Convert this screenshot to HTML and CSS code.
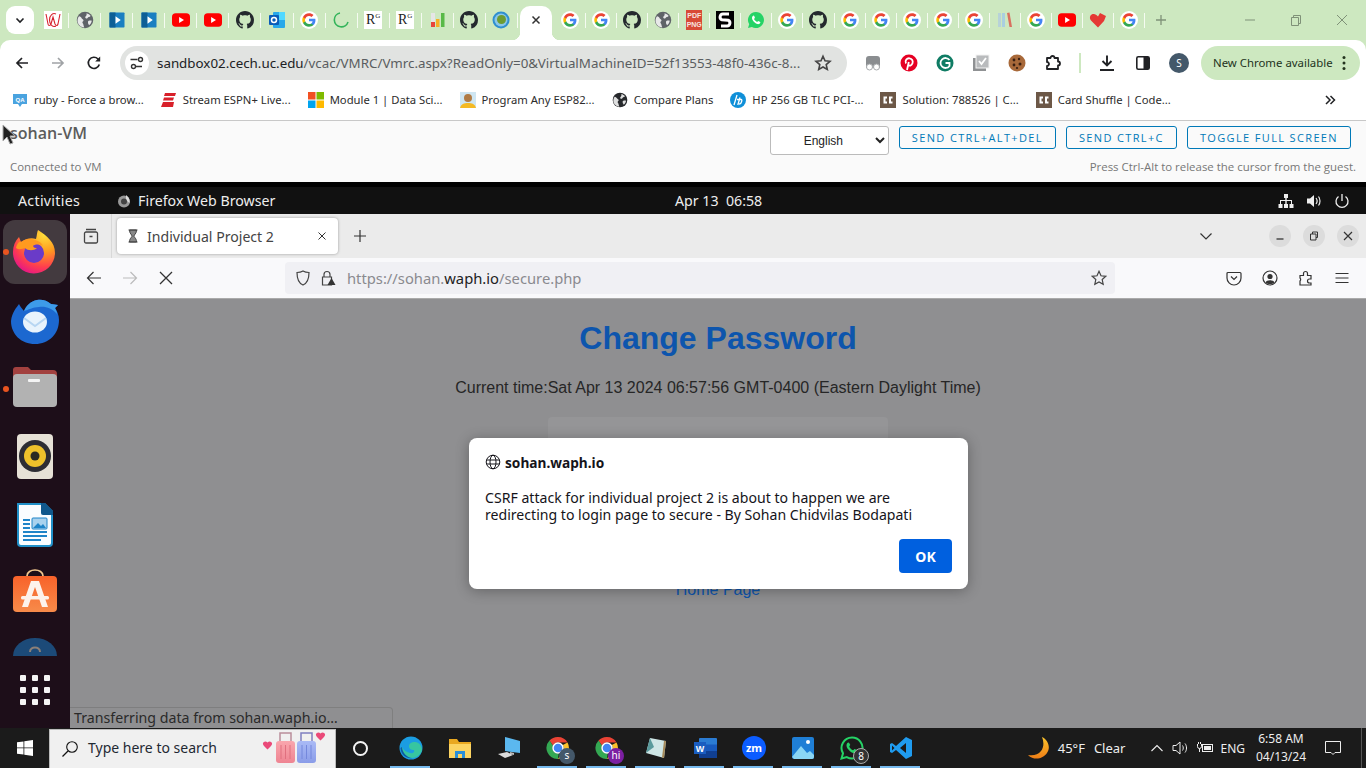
FILE: index.html
```html
<!DOCTYPE html>
<html lang="en">
<head>
  <meta charset="UTF-8">
  <title>Individual Project 2</title>
  <link rel="stylesheet" href="styles.css">
</head>
<body>

<svg class="defs" aria-hidden="true">
  <defs>
    <radialGradient id="ff-body" cx="0.75" cy="0.1" r="1">
      <stop offset="0" stop-color="#ffe03c"/><stop offset="0.4" stop-color="#ff9a1f"/><stop offset="0.75" stop-color="#ff3e4e"/><stop offset="1" stop-color="#e3148a"/>
    </radialGradient>
    <linearGradient id="moon-fill" x1="0" y1="0" x2="0" y2="1">
      <stop offset="0" stop-color="#fcc52c"/><stop offset="1" stop-color="#ee7d16"/>
    </linearGradient>
    <linearGradient id="soft-orange" x1="0" y1="0" x2="0" y2="1">
      <stop offset="0" stop-color="#f8622a"/><stop offset="1" stop-color="#f78b4a"/>
    </linearGradient>
    <linearGradient id="bag-red" x1="0" y1="0" x2="0" y2="1">
      <stop offset="0" stop-color="#f9a6ad"/><stop offset="1" stop-color="#ee8492"/>
    </linearGradient>
    <linearGradient id="bag-blue" x1="0" y1="0" x2="0" y2="1">
      <stop offset="0" stop-color="#a9baf6"/><stop offset="1" stop-color="#8a9ce8"/>
    </linearGradient>

    <symbol id="g" viewBox="0 0 24 24">
      <circle cx="12" cy="12" r="12" fill="#fff"/>
      <path fill="#4285f4" d="M20.6 12.2c0-.6-.1-1.2-.2-1.8H12v3.4h4.8c-.2 1.100-.8 2-1.800 2.700v2.200h2.900c1.700-1.600 2.700-3.900 2.700-6.500z"/>
      <path fill="#34a853" d="M12 21c2.400 0 4.500-.8 5.900-2.200L15 16.500c-.8.500-1.800.9-3 .9-2.300 0-4.300-1.600-5-3.700H4v2.300C5.500 19 8.500 21 12 21z"/>
      <path fill="#fbbc05" d="M7 13.700c-.2-.5-.3-1.100-.3-1.700s.1-1.200.3-1.700V8H4c-.6 1.200-1 2.600-1 4s.4 2.800 1 4z"/>
      <path fill="#ea4335" d="M12 6.600c1.300 0 2.500.5 3.400 1.300l2.600-2.600C16.400 3.900 14.400 3 12 3 8.500 3 5.500 5 4 8l3 2.300c.7-2.100 2.700-3.700 5-3.700z"/>
    </symbol>
    <symbol id="globe-solid" viewBox="0 0 24 24">
      <circle cx="12" cy="12" r="11" fill="currentColor"/>
      <path fill="#fff" opacity=".85" d="M4 7c2 .5 3 1.500 3.500 2.500S10 11 10 12.500s-1.500 1-1.500 2.500S10 17 10 19l1 3c-4-.3-7-2.500-8.500-6C1.500 13 2 9.500 4 7zM14 3c2 .5 4.500 2 5.500 3.500-1 1.500-2.500 1-3.500 2s-1 2-2.500 1.500S12 8 13 7s1.500-2 1-4zM17 13c1.500-.5 3-.5 4 0-.3 2.500-1.500 4.500-3.500 6-.5-1.500-1.500-2-1.500-3.500s0-2 1-2.500z"/>
    </symbol>
    <symbol id="gh" viewBox="0 0 16 16">
      <path fill="#24292e" d="M8 0C3.580 0 0 3.580 0 8c0 3.540 2.290 6.530 5.470 7.590.4.070.55-.17.55-.38 0-.19-.01-.82-.01-1.490-2.010.37-2.530-.49-2.690-.94-.09-.23-.48-.94-.82-1.130-.28-.15-.68-.52-.01-.53.63-.01 1.080.58 1.230.82.720 1.210 1.870.87 2.330.66.070-.52.280-.87.510-1.070-1.780-.2-3.640-.89-3.640-3.950 0-.87.310-1.590.820-2.150-.08-.2-.36-1.020.08-2.120 0 0 .67-.21 2.200.82.640-.18 1.320-.27 2-.27s1.360.09 2 .27c1.530-1.040 2.200-.82 2.200-.82.440 1.100.160 1.920.080 2.120.51.560.82 1.270.82 2.150 0 3.070-1.870 3.750-3.650 3.950.290.250.540.730.540 1.480 0 1.070-.01 1.930-.01 2.200 0 .21.150.46.550.38A8.013 8.013 0 0 0 16 8c0-4.420-3.580-8-8-8z"/>
    </symbol>
    <symbol id="yt" viewBox="0 0 24 24">
      <rect y="3" width="24" height="18" rx="5" fill="#f00"/>
      <path fill="#fff" d="M9.500 8l6.500 4-6.500 4z"/>
    </symbol>
    <symbol id="play" viewBox="0 0 24 24">
      <rect x="2" y="2" width="20" height="20" rx="1" fill="#1a7fc1"/>
      <rect x="2" y="2" width="8" height="20" fill="#0d5f96"/>
      <path fill="#fff" d="M10 7l7 5-7 5z"/>
    </symbol>
    <symbol id="cc" viewBox="0 0 16 16">
      <rect width="16" height="16" fill="#6d5847"/>
      <path fill="none" stroke="#fff" stroke-width="2" d="M7 5.500H4.500v5H7M12.500 5.500H10v5h2.500"/>
    </symbol>
    <symbol id="ring" viewBox="0 0 24 24">
      <path fill="#ea4335" d="M12 1a11 11 0 0 1 9.500 5.500H12a5.500 5.500 0 0 0-5 3.200L3.500 4.500A11 11 0 0 1 12 1z"/>
      <path fill="#fbc02d" d="M21.500 6.500A11 11 0 0 1 12 23l4.700-8.300A5.500 5.500 0 0 0 16.800 9z"/>
      <path fill="#34a853" d="M3.500 4.500 7 9.800a5.500 5.500 0 0 0 5.700 7.700L12 23A11 11 0 0 1 3.500 4.500z"/>
      <circle cx="12" cy="12" r="5" fill="#4285f4" stroke="#fff" stroke-width="1.500"/>
    </symbol>
  </defs>
</svg>

<header class="chrome">
  <div class="tabstrip">
    <span class="tab-menu"><svg class="i12" viewBox="0 0 12 12"><path d="M2.500 4.500 6 8l3.500-3.500" fill="none" stroke="#202124" stroke-width="1.600"/></svg></span>
    <div class="tabs tabs-left">
      <span class="tab"><svg class="fav" viewBox="0 0 18 18"><rect width="18" height="18" fill="#fff"/><path d="M2 3l2 10c.3 2 2 2 3 0l2-7 2 7c1 2 2.500 2 3 0l2-10M12 3c-3-1.500-6.500 1-6.500 6s3.500 7.500 6.500 6" fill="none" stroke="#d8232f" stroke-width="1.100"/></svg></span>
      <span class="tab"><svg class="fav globe-grey"><use href="#globe-solid"/></svg></span>
      <span class="tab"><svg class="fav"><use href="#play"/></svg></span>
      <span class="tab"><svg class="fav"><use href="#play"/></svg></span>
      <span class="tab"><svg class="fav"><use href="#yt"/></svg></span>
      <span class="tab"><svg class="fav"><use href="#yt"/></svg></span>
      <span class="tab"><svg class="fav"><use href="#gh"/></svg></span>
      <span class="tab"><svg class="fav" viewBox="0 0 18 18"><rect x="5" y="1" width="12" height="16" rx="1" fill="#28a8ea"/><rect x="11" y="1" width="6" height="8" fill="#50d9ff"/><rect x="1" y="4" width="10" height="10" rx="1" fill="#0a5cb8"/><circle cx="6" cy="9" r="2.500" fill="none" stroke="#fff" stroke-width="1.500"/></svg></span>
      <span class="tab"><svg class="fav"><use href="#g"/></svg></span>
      <span class="tab"><svg class="fav" viewBox="0 0 18 18"><path d="M8 2a7 7 0 1 0 8 9" fill="none" stroke="#34b45a" stroke-width="1.600"/></svg></span>
      <span class="tab"><span class="rg">R<sup>G</sup></span></span>
      <span class="tab"><span class="rg">R<sup>G</sup></span></span>
      <span class="tab"><svg class="fav" viewBox="0 0 18 18"><rect x="3" y="2" width="4" height="14" fill="#e6e6e6"/><rect x="3" y="11" width="4" height="5" fill="#e8453c"/><rect x="8" y="8" width="3.500" height="8" fill="#f6b026"/><rect x="13" y="2" width="3.500" height="14" fill="#58b947"/></svg></span>
      <span class="tab"><svg class="fav"><use href="#gh"/></svg></span>
      <span class="tab"><svg class="fav" viewBox="0 0 18 18"><circle cx="9" cy="9" r="8.500" fill="#2f8fd0"/><circle cx="9" cy="9" r="6.500" fill="#8cc7e8"/><circle cx="9.500" cy="8.500" r="4.500" fill="#6d9c32"/></svg></span>
    </div>
    <span class="tab-active"><svg class="i12" viewBox="0 0 12 12"><path d="M2.500 2.500l7 7M9.500 2.500l-7 7" stroke="#333" stroke-width="1.500"/></svg></span>
    <div class="tabs tabs-right">
      <span class="tab"><svg class="fav"><use href="#g"/></svg></span>
      <span class="tab"><svg class="fav"><use href="#g"/></svg></span>
      <span class="tab"><svg class="fav"><use href="#gh"/></svg></span>
      <span class="tab"><svg class="fav globe-grey"><use href="#globe-solid"/></svg></span>
      <span class="tab"><span class="pdf">PDF<br>PNG</span></span>
      <span class="tab"><svg class="fav" viewBox="0 0 18 18"><rect width="18" height="18" fill="#000"/><path d="M13 3H7a3 3 0 0 0-1 5.800l6 .4A3 3 0 0 1 11 15H5" fill="none" stroke="#fff" stroke-width="3"/></svg></span>
      <span class="tab"><svg class="fav" viewBox="0 0 18 18"><path fill="#25d366" d="M9 1a8 8 0 0 0-6.800 12.200L1 17l3.900-1.100A8 8 0 1 0 9 1z"/><path fill="#fff" d="M6.500 4.800c-.5 0-1.500.8-1.500 2.300s1.200 3.200 2.700 4.500 3.300 1.900 4.200 1.500 1.500-1.200 1.500-1.800-1.900-1.400-2.200-1.400-.8 1-1.100 1-1.100-.4-2-1.300-1-1.500-.9-1.800.8-.7.700-1.100-.9-2.400-1.400-2.400z"/></svg></span>
      <span class="tab"><svg class="fav"><use href="#g"/></svg></span>
      <span class="tab"><svg class="fav"><use href="#gh"/></svg></span>
      <span class="tab"><svg class="fav"><use href="#g"/></svg></span>
      <span class="tab"><svg class="fav"><use href="#g"/></svg></span>
      <span class="tab"><svg class="fav"><use href="#g"/></svg></span>
      <span class="tab"><svg class="fav"><use href="#g"/></svg></span>
      <span class="tab"><svg class="fav"><use href="#g"/></svg></span>
      <span class="tab"><svg class="fav" viewBox="0 0 18 18"><rect x="2" y="2" width="3" height="14" fill="#b7d2d8"/><rect x="6" y="2" width="3" height="14" fill="#a9cfe0"/><path d="M11 2l2.500-.5L16 16h-2.500z" fill="#d9705f"/></svg></span>
      <span class="tab"><svg class="fav"><use href="#g"/></svg></span>
      <span class="tab"><svg class="fav"><use href="#yt"/></svg></span>
      <span class="tab"><svg class="fav" viewBox="0 0 18 18"><path fill="#e53935" d="M9 16.500 2 9.500C0 7 1 3.500 4 3c2-.3 3.500.7 5 2.500L11 2l6 3-2 5z"/></svg></span>
      <span class="tab"><svg class="fav"><use href="#g"/></svg></span>
    </div>
    <svg class="new-tab" viewBox="0 0 12 12"><path d="M6 1v10M1 6h10" stroke="#7f9178" stroke-width="1.300"/></svg>
    <div class="win-ctrls">
      <svg viewBox="0 0 12 12"><path d="M1 6h10" stroke="#7f9178"/></svg>
      <svg viewBox="0 0 12 12"><path d="M1.500 3.500h7v8h-7zM3.500 3.500v-2h7v8h-2" fill="none" stroke="#7f9178"/></svg>
      <svg viewBox="0 0 12 12"><path d="M1 1l10 10M11 1 1 11" stroke="#7f9178"/></svg>
    </div>
  </div>

  <div class="toolbar">
    <span class="tb-btn"><svg class="i16" viewBox="0 0 16 16"><path d="M14 8H3M8 3 3 8l5 5" fill="none" stroke="#202124" stroke-width="1.700"/></svg></span>
    <span class="tb-btn"><svg class="i16" viewBox="0 0 16 16"><path d="M2 8h11M8 3l5 5-5 5" fill="none" stroke="#a0a3a6" stroke-width="1.700"/></svg></span>
    <span class="tb-btn"><svg class="i16" viewBox="0 0 16 16"><path d="M13.300 9.500A5.600 5.600 0 1 1 12 4l1.500 1.500" fill="none" stroke="#202124" stroke-width="1.700"/><path d="M14.200 1.500v5h-5z" fill="#202124"/></svg></span>
    <div class="omnibox">
      <span class="tune"><svg class="i16" viewBox="0 0 16 16"><path d="M1.500 4.500h7M13 11.500H7" stroke="#333" stroke-width="1.500"/><circle cx="11.500" cy="4.500" r="2" fill="none" stroke="#333" stroke-width="1.400"/><circle cx="4.500" cy="11.500" r="2" fill="none" stroke="#333" stroke-width="1.400"/></svg></span>
      <span class="omni-url"><b>sandbox02.cech.uc.edu</b>/vcac/VMRC/Vmrc.aspx?ReadOnly=0&amp;VirtualMachineID=52f13553-48f0-436c-8...</span>
      <svg class="omni-star" viewBox="0 0 18 18"><path d="M9 2.200l2 4.600 5 .5-3.800 3.300 1.100 4.900L9 13l-4.300 2.500 1.100-4.900L2 7.300l5-.5z" fill="none" stroke="#444" stroke-width="1.600"/></svg>
    </div>
    <div class="ext-row">
      <span class="tb-btn"><svg class="i18" viewBox="0 0 18 18"><path d="M2 14V5a3 3 0 0 1 3-3h8a3 3 0 0 1 3 3v9z" fill="#8a8d90"/><circle cx="5.500" cy="13" r="3" fill="#fff" stroke="#a8abae"/><circle cx="12.500" cy="13" r="3" fill="#fff" stroke="#a8abae"/></svg></span>
      <span class="tb-btn"><svg class="i18" viewBox="0 0 18 18"><circle cx="9" cy="9" r="8.500" fill="#e60023"/><path d="M7 16l1.800-8M6 9.500C4.500 6.500 7 4 9.500 4.300s3.800 2.500 3 5-3.300 3-4.300 1.500" fill="none" stroke="#fff" stroke-width="1.800"/></svg></span>
      <span class="tb-btn"><svg class="i18" viewBox="0 0 18 18"><circle cx="9" cy="9" r="8.500" fill="#0f7c64"/><path d="M13.500 6A5 5 0 1 0 13.500 12V9H9.500" fill="none" stroke="#fff" stroke-width="1.800"/></svg></span>
      <span class="tb-btn"><svg class="i18" viewBox="0 0 18 18"><rect x="1" y="4" width="13" height="13" fill="#8f9193"/><rect x="4" y="1" width="13" height="13" fill="#b9bbbd" stroke="#f3f3f3"/><path d="M7 7l2.500 3L14 4" fill="none" stroke="#fff" stroke-width="1.800"/></svg></span>
      <span class="tb-btn"><svg class="i18" viewBox="0 0 18 18"><circle cx="9" cy="9" r="8.500" fill="#a8693a"/><circle cx="6" cy="6" r="1.400" fill="#3a2012"/><circle cx="11" cy="5" r="1.200" fill="#3a2012"/><circle cx="12" cy="10" r="1.500" fill="#3a2012"/><circle cx="6" cy="11" r="1.400" fill="#3a2012"/><circle cx="9" cy="14" r="1.100" fill="#3a2012"/></svg></span>
      <span class="tb-btn"><svg class="i18" viewBox="0 0 18 18"><path d="M3 4h3.500a2 2 0 0 1 4 0H14v3.500a2 2 0 0 1 0 4V15H3v-3a2 2 0 0 0 0-4z" fill="none" stroke="#202124" stroke-width="1.800" stroke-linejoin="round"/></svg></span>
    </div>
    <span class="tb-sep"></span>
    <span class="tb-btn"><svg class="i18" viewBox="0 0 18 18"><path d="M9 1.500V11M4.500 7 9 11.500 13.500 7M2 16h14" fill="none" stroke="#202124" stroke-width="1.900"/></svg></span>
    <span class="tb-btn"><svg class="i18" viewBox="0 0 18 18"><rect x="2.800" y="2.800" width="12.400" height="12.400" rx="1.500" fill="none" stroke="#202124" stroke-width="1.600"/><rect x="9.500" y="3" width="5.500" height="12" fill="#202124"/></svg></span>
    <span class="tb-btn"><span class="avatar">S</span></span>
    <div class="update-pill">New Chrome available<svg viewBox="0 0 4 16"><circle cx="2" cy="2.500" r="1.500"/><circle cx="2" cy="8" r="1.500"/><circle cx="2" cy="13.500" r="1.500"/></svg></div>
  </div>

  <nav class="bookmarks">
    <span class="bm"><svg class="i16" viewBox="0 0 16 16"><path d="M1 2h14v10h-5l-2 3-2-3H1z" fill="#4aa3df"/><text x="8" y="10" class="qa">QA</text></svg>ruby - Force a brow...</span>
    <span class="bm"><svg class="i16" viewBox="0 0 16 16"><path fill="#d8202a" d="M4 1h11l-1 3H3zM3 5.500h10L12 8.500H2zM2 10h11l-1 5H0z"/></svg>Stream ESPN+ Live...</span>
    <span class="bm"><svg class="i16" viewBox="0 0 16 16"><rect width="7.500" height="7.500" fill="#f25022"/><rect x="8.500" width="7.500" height="7.500" fill="#7fba00"/><rect y="8.500" width="7.500" height="7.500" fill="#00a4ef"/><rect x="8.500" y="8.500" width="7.500" height="7.500" fill="#ffb900"/></svg>Module 1 | Data Sci...</span>
    <span class="bm"><svg class="i16" viewBox="0 0 16 16"><rect width="16" height="16" fill="#cfe6f2"/><path d="M0 16c1-4 4-5 8-5s7 1 8 5z" fill="#f4b924"/><circle cx="8" cy="6" r="4" fill="#b07b45"/></svg>Program Any ESP82...</span>
    <span class="bm"><svg class="i16 globe-dark"><use href="#globe-solid"/></svg>Compare Plans</span>
    <span class="bm"><svg class="i16" viewBox="0 0 16 16"><circle cx="8" cy="8" r="8" fill="#0f8fd8"/><path d="M7 3 4 13M10 5.500l-2.200 7.500M7 7.500h4c1 0 1 1 .6 2l-.6 1.500c-.3 1-1 1-2 1" fill="none" stroke="#fff" stroke-width="1.300"/></svg>HP 256 GB TLC PCI-...</span>
    <span class="bm"><svg class="i16"><use href="#cc"/></svg>Solution: 788526 | C...</span>
    <span class="bm"><svg class="i16"><use href="#cc"/></svg>Card Shuffle | Code...</span>
    <svg class="bm-more" viewBox="0 0 12 12"><path d="M2 2l4 4-4 4M6.500 2l4 4-4 4" fill="none" stroke="#202124" stroke-width="1.500"/></svg>
  </nav>
</header>

<section class="vm-bar">
  <svg class="cursor" viewBox="0 0 14 22"><path d="M1 1v16l4-4 3 7 3-1-3-7h5z" fill="#222" stroke="#aaa"/></svg>
  <div class="vm-row">
    <div class="vm-name">sohan-VM</div>
    <div class="vm-actions">
      <select class="vm-lang"><option>English</option></select>
      <button class="vm-btn">Send Ctrl+Alt+Del</button>
      <button class="vm-btn">Send Ctrl+C</button>
      <button class="vm-btn">Toggle Full Screen</button>
    </div>
  </div>
  <div class="vm-row vm-notes">
    <span>Connected to VM</span>
    <span>Press Ctrl-Alt to release the cursor from the guest.</span>
  </div>
</section>

<div class="guest">
  <div class="gnome-bar">
    <div class="gnome-left">
      <span class="gnome-act">Activities</span>
      <span class="gnome-app"><svg class="i14" viewBox="0 0 14 14"><circle cx="7" cy="7.500" r="6" fill="#999"/><path d="M9 1c3 2 4 5 3.500 8L9 6z" fill="#ddd"/><circle cx="7" cy="7.500" r="3" fill="#444"/></svg>Firefox Web Browser</span>
    </div>
    <div class="gnome-clock">Apr 13&nbsp;&nbsp;06:58</div>
    <div class="gnome-tray">
      <svg class="i16" viewBox="0 0 16 16"><path fill="#eee" d="M6 1h4v4H8.700v2H14v4h1.500v4h-4v-4H13V8H8.700v3H10v4H6v-4h1.300V8H3v3h1.500v4h-4v-4H2V7h5.300V5H6z"/></svg>
      <svg class="i16" viewBox="0 0 16 16"><path fill="#eee" d="M1 5.500h3L8 2v12l-4-3.500H1z"/><path d="M10 5c1.300 1.700 1.300 4.300 0 6M12.500 3.500c2 2.500 2 6.500 0 9" fill="none" stroke="#eee" stroke-width="1.200"/></svg>
      <svg class="i16" viewBox="0 0 16 16"><path d="M8 1v7M4.500 3.500a6 6 0 1 0 7 0" fill="none" stroke="#eee" stroke-width="1.300"/></svg>
    </div>
  </div>

  <div class="desktop">
    <aside class="dock">
      <div class="dock-item dock-active">
        <svg class="dock-ico" viewBox="0 0 48 48">
          <path d="M2 24C2 18 4 13 8 9l2 5c4-3 10-5 15-3 1-4 1-7 2-9 9 6 17 12 17 23A21 21 0 0 1 2 24z" fill="url(#ff-body)"/>
          <circle cx="23" cy="25" r="10" fill="#6a3bc8"/>
          <path d="M5 20c1-4 3-7 5-6 4-3 10-4 14-2 4 1 7 3 8 6-4-2-8-2-10 0 1 2 2 2 4 2-3 3-9 3-12 0-3 1-6 2-9 0z" fill="#ff9a1f"/>
        </svg>
      </div>
      <div class="dock-item">
        <svg class="dock-ico" viewBox="0 0 48 48">
          <path d="M8 7C6 10 1 15 0 24c0 13 10 23 24 23s24-10 24-24c0-5-2-9-4-12l3-3-7-1C36 3 30 2 26 3 20 4 15 9 13 14 11 12 9 9 8 7z" fill="#1c68d0"/>
          <path d="M13 14C15 9 20 4 26 3c4-1 10 0 14 4l7 1-3 3c1 2 2 4 2 6-5-6-12-8-18-7-6 0-11 3-15 4z" fill="#3d9be9"/>
          <ellipse cx="24" cy="25" rx="12" ry="10.500" fill="#e8f3fc"/>
          <path d="M13 21l11 8 11-8" fill="none" stroke="#b7d6f2" stroke-width="2"/>
        </svg>
      </div>
      <div class="dock-item">
        <svg class="dock-ico" viewBox="0 0 48 48">
          <path d="M2 5a3 3 0 0 1 3-3h12l3 3h22a4 4 0 0 1 4 4v10H2z" fill="#a2413f"/>
          <rect x="2" y="9" width="44" height="33" rx="4" fill="#b2b2b2"/>
          <rect x="17" y="14" width="12" height="3" rx="1" fill="#f4f4f4"/>
        </svg>
      </div>
      <div class="dock-item">
        <svg class="dock-ico" viewBox="0 0 48 48">
          <rect x="6" y="1" width="36" height="45" rx="4" fill="#e6e1d6"/>
          <circle cx="24" cy="23" r="16" fill="#2d2d33"/>
          <circle cx="24" cy="23" r="11" fill="#eec22b"/>
          <circle cx="24" cy="23" r="4.500" fill="#2a2a22"/>
        </svg>
      </div>
      <div class="dock-item">
        <svg class="dock-ico" viewBox="0 0 48 48">
          <path d="M6 2h28l8 8v32a4 4 0 0 1-4 4H10a4 4 0 0 1-4-4z" fill="#2090c8"/>
          <path d="M8 4h22l10 10v28a2 2 0 0 1-2 2H10a2 2 0 0 1-2-2z" fill="#fafdff"/>
          <path d="M30 2h4l8 8v4H32a2 2 0 0 1-2-2z" fill="#10588c"/>
          <path d="M12 19h7M12 23h7M12 27h7M12 31h24M12 35h24M12 39h18" stroke="#1e84c8" stroke-width="2"/>
          <rect x="21" y="17" width="15" height="11" rx="1" fill="#a9d2ee" stroke="#1e84c8"/>
          <path d="M22 27l5-5 3 3 2-2 3 4z" fill="#1e84c8"/>
        </svg>
      </div>
      <div class="dock-item">
        <svg class="dock-ico dock-store" viewBox="0 0 48 48">
          <path d="M16 8c0-8 16-8 16 0" fill="none" stroke="#f2c78e" stroke-width="1.700"/>
          <rect x="2" y="8" width="44" height="36" rx="4" fill="url(#soft-orange)"/>
          <path d="M20 13h8l9 26h-6l-7-20-7 20h-6z" fill="#fdf3ec"/>
          <rect x="10" y="28" width="28" height="3.500" rx="1.500" fill="#fdf3ec"/>
        </svg>
      </div>
      <div class="dock-item dock-cut">
        <svg class="dock-ico" viewBox="0 0 48 18">
          <path d="M2 18a22 18 0 0 1 44 0z" fill="#1c4a78"/>
          <path d="M19 14c0-6 10-6 10 0" fill="none" stroke="#8c8078" stroke-width="2"/>
        </svg>
      </div>
      <div class="dock-apps">
        <i></i><i></i><i></i><i></i><i></i><i></i><i></i><i></i><i></i>
      </div>
    </aside>

    <main class="firefox">
      <div class="ff-tabbar">
        <span class="ff-list"><svg class="i18" viewBox="0 0 18 18"><path d="M4 2.500h10M2.500 6.500a1.500 1.500 0 0 1 1.500-1.500h10a1.500 1.500 0 0 1 1.500 1.500v8a1.500 1.500 0 0 1-1.500 1.500H4a1.500 1.500 0 0 1-1.500-1.500zM7.500 9.500h3" fill="none" stroke="#444" stroke-width="1.300"/></svg></span>
        <div class="ff-tab">
          <svg class="i14" viewBox="0 0 14 14"><path d="M2.500 1h9M2.500 13h9M3.500 1c0 4 2.500 4.500 2.500 6S3.500 9 3.500 13h7c0-4-2.500-4.500-2.500-6s2.500-2 2.500-6z" fill="#888" stroke="#444"/></svg>
          <span class="ff-tab-title">Individual Project 2</span>
          <svg class="i12" viewBox="0 0 12 12"><path d="M2.500 2.500l7 7M9.500 2.500l-7 7" stroke="#333" stroke-width="1"/></svg>
        </div>
        <svg class="ff-new" viewBox="0 0 14 14"><path d="M7 1v12M1 7h12" stroke="#333" stroke-width="1.200"/></svg>
        <svg class="ff-alltabs" viewBox="0 0 14 14"><path d="M1.500 4.500 7 10l5.500-5.500" fill="none" stroke="#333" stroke-width="1.200"/></svg>
        <span class="ff-win"><svg class="i10" viewBox="0 0 10 10"><path d="M1.500 8h7" stroke="#333" stroke-width="1.300"/></svg></span>
        <span class="ff-win"><svg class="i10" viewBox="0 0 10 10"><path d="M1.500 3h5.500v6h-5.500zM3.500 3V1h5v5.500H7" fill="none" stroke="#333"/></svg></span>
        <span class="ff-win"><svg class="i10" viewBox="0 0 10 10"><path d="M1 1l8 8M9 1 1 9" stroke="#333" stroke-width="1.200"/></svg></span>
      </div>

      <div class="ff-toolbar">
        <span class="ff-nav"><svg class="i16" viewBox="0 0 16 16"><path d="M15 8H1.500M7.500 2 1.500 8l6 6" fill="none" stroke="#333" stroke-width="1.200"/></svg></span>
        <span class="ff-nav"><svg class="i16" viewBox="0 0 16 16"><path d="M1 8h13.500M8.500 2l6 6-6 6" fill="none" stroke="#bbb" stroke-width="1.200"/></svg></span>
        <span class="ff-nav"><svg class="i16" viewBox="0 0 16 16"><path d="M2 2l12 12M14 2 2 14" stroke="#333" stroke-width="1.300"/></svg></span>
        <div class="ff-url">
          <svg class="i16" viewBox="0 0 16 16"><path d="M8 1c2 1.200 4 1.500 6 1.500 0 6-1 10.500-6 12.500C3 13 2 8.500 2 2.500 4 2.500 6 2.200 8 1z" fill="none" stroke="#444" stroke-width="1.200"/></svg>
          <svg class="i16" viewBox="0 0 16 16"><path d="M4 7V4.500a3 3 0 0 1 6 0V7M2.500 7h9v8h-9z" fill="none" stroke="#444" stroke-width="1.200"/><path d="M11.500 8l4 7h-8z" fill="#333"/></svg>
          <span class="ff-url-text">https://sohan.<b>waph.io</b>/secure.php</span>
          <svg class="i16 ff-star" viewBox="0 0 16 16"><path d="M8 1.300l2 4.500 4.800.5-3.600 3.200 1 4.800L8 11.900l-4.200 2.400 1-4.800L1.200 6.300 6 5.800z" fill="none" stroke="#444" stroke-width="1.200"/></svg>
        </div>
        <div class="ff-tools">
          <svg class="i16" viewBox="0 0 16 16"><path d="M2 2.500h12a1 1 0 0 1 1 1V8a7 7 0 0 1-14 0V3.500a1 1 0 0 1 1-1z" fill="none" stroke="#333" stroke-width="1.200"/><path d="M5 6.500l3 3 3-3" fill="none" stroke="#333" stroke-width="1.200"/></svg>
          <svg class="i16" viewBox="0 0 16 16"><circle cx="8" cy="8" r="7" fill="none" stroke="#333" stroke-width="1.200"/><circle cx="8" cy="6.500" r="2.600" fill="#333"/><path d="M3.500 12.500c1-3 8-3 9 0-2 2-7 2-9 0z" fill="#333"/></svg>
          <svg class="i16" viewBox="0 0 16 16"><path d="M2 5.500h3.500V3.500a2 2 0 0 1 4 0v2H13v3.500h-1.500a2 2 0 0 0 0 4H13V15H2v-4a2 2 0 0 0 0-3z" fill="none" stroke="#333" stroke-width="1.200"/></svg>
          <svg class="i16" viewBox="0 0 16 16"><path d="M1.500 3.500h13M1.500 8h13M1.500 12.500h13" stroke="#333" stroke-width="1.200"/></svg>
        </div>
      </div>

      <div class="page">
        <h1>Change Password</h1>
        <p class="page-time">Current time:Sat Apr 13 2024 06:57:56 GMT-0400 (Eastern Daylight Time)</p>
        <div class="page-card"></div>
        <a class="page-link">Home Page</a>

        <div class="alert">
          <div class="alert-host">
            <svg class="i16" viewBox="0 0 16 16"><g fill="none" stroke="#15141a" stroke-width="1"><circle cx="8" cy="8" r="6.800"/><ellipse cx="8" cy="8" rx="3" ry="6.800"/><path d="M1.500 6h13M1.500 10h13"/></g></svg>
            <span>sohan.waph.io</span>
          </div>
          <p class="alert-msg">CSRF attack for individual project 2 is about to happen we are<br>redirecting to login page to secure - By Sohan Chidvilas Bodapati</p>
          <div class="alert-foot"><button class="alert-ok">OK</button></div>
        </div>

        <div class="status-panel">Transferring data from sohan.waph.io…</div>
      </div>
    </main>
  </div>
</div>

<footer class="taskbar">
  <span class="start"><svg viewBox="0 0 16 16"><path fill="#fff" d="M0 2.300 6.500 1.400V7.500H0zM7.300 1.300 16 0V7.500H7.300zM0 8.300h6.500v6.300L0 13.700zM7.300 8.300H16V16l-8.700-1.300z"/></svg></span>
  <div class="search">
    <svg class="i18" viewBox="0 0 18 18"><circle cx="11" cy="7" r="5.300" fill="none" stroke="#111" stroke-width="1.100"/><path d="M7 11 1.500 16.500" stroke="#111" stroke-width="1.300"/></svg>
    <span class="search-text">Type here to search</span>
    <svg class="search-art" viewBox="0 0 64 34">
      <path d="M2 14c-3-3 1-6 3.500-3.500C8 8 12 11 9 14l-3.500 3.500z" fill="#ea4a79"/>
      <rect x="14" y="9" width="19" height="22" rx="3" fill="url(#bag-red)"/>
      <path d="M18 9V1h11v8" fill="none" stroke="#b98d9a" stroke-width="1.500"/>
      <path d="M19 13v14M23.500 13v14M28 13v14" stroke="#e0707f"/>
      <rect x="35" y="9" width="19" height="22" rx="3" fill="url(#bag-blue)"/>
      <path d="M39 9V1h11v8" fill="none" stroke="#7f7fc0" stroke-width="1.500"/>
      <path d="M40 13v14M44.500 13v14M49 13v14" stroke="#7488dc"/>
      <path d="M55 5c-3-3 1-6 3.500-3.500C61-1 65 2 62 5l-3.500 3.500z" fill="#ea4a79"/>
    </svg>
  </div>
  <span class="cortana"></span>
  <div class="task-icons">
    <span class="task on"><svg class="i24" viewBox="0 0 24 24"><circle cx="12" cy="12" r="11.500" fill="#1b9de2"/><path d="M23 14c-1 5-6 8-10 8-5 0-11-4-10-11 1 3 4 5 8 6 3 .6 5-1 4-3-3 0-5-1-5-4 0-2 2-4 6-4 4 0 7 4 7 8z" fill="#37c6a0"/><path d="M3 11c0 5 5 11 10 11-4 1-11-2-11.500-10z" fill="#0c59a4"/></svg></span>
    <span class="task"><svg class="i24" viewBox="0 0 24 24"><path d="M1 3h8l2 3h12v16H1z" fill="#e9a820"/><rect x="1" y="8" width="22" height="14" fill="#fcd462"/><rect x="7" y="15" width="10" height="7" fill="#2a8fd8"/><rect x="10" y="18" width="4" height="4" fill="#fcd462"/></svg></span>
    <span class="task"><svg class="i24" viewBox="0 0 24 24"><path d="M8 1l15 4v12L8 15z" fill="#5bb8ef"/><path d="M1 18l9-2 6 3-8 3z" fill="#dcdcdc"/><path d="M13 16l4 1v2l-4-1z" fill="#bbb"/></svg></span>
    <span class="task on"><svg class="i24"><use href="#ring"/></svg><span class="badge badge-s">s</span></span>
    <span class="task on"><svg class="i24"><use href="#ring"/></svg><span class="badge badge-hi">hi</span></span>
    <span class="task on"><svg class="i24" viewBox="0 0 24 24"><path d="M6 2l16 3-2 17-18-5z" fill="#cfe6e6"/><path d="M20 5l2 0-2 17-2-.5z" fill="#a58a5a"/><path d="M6 2 2 17l8-6z" fill="#5a9a9c"/></svg></span>
    <span class="task on"><svg class="i24" viewBox="0 0 24 24"><rect x="6" y="2" width="18" height="20" rx="1" fill="#2b7cd3"/><rect x="6" y="15" width="18" height="7" fill="#103f91"/><rect x="6" y="8.500" width="18" height="6.500" fill="#185abd"/><rect x="1" y="6" width="12" height="12" fill="#1a5dc0"/><text x="7" y="15.500" class="word-w">W</text></svg></span>
    <span class="task on"><svg class="i24" viewBox="0 0 24 24"><circle cx="12" cy="12" r="12" fill="#0b5cff"/><text x="12" y="15.500" class="zoom-t">zm</text></svg></span>
    <span class="task on"><svg class="i24" viewBox="0 0 24 24"><rect x="1" y="1" width="22" height="22" rx="2" fill="#1f7fd6"/><path d="M1 21l9-11 6 7 3-2 4 4v2a2 2 0 0 1-2 2H3z" fill="#8ad6f5"/><circle cx="17" cy="6" r="2" fill="#fff"/></svg></span>
    <span class="task on"><svg class="i24" viewBox="0 0 24 24"><path d="M12 1.500a10.500 10.500 0 0 0-9 15.800L1.500 22.500l5.300-1.400A10.500 10.500 0 1 0 12 1.500z" fill="none" stroke="#25d366" stroke-width="2"/><path fill="#25d366" d="M8.500 6.500c-1 0-2 1-2 3s1.500 4 3.500 5.700 4.500 2.500 5.500 2 2-1.700 2-2.300-2.500-2-3-2-1 1.300-1.500 1.300-1.500-.5-2.500-1.600-1.300-2-1.200-2.300 1-1 .9-1.500-1.200-2.300-1.700-2.300z"/></svg><span class="badge badge-n">8</span></span>
    <span class="task on"><svg class="i24" viewBox="0 0 24 24"><path d="M17 1l6 3v16l-6 3L7 14l-4 3-2-1V8l2-1 4 3z" fill="#1f9cf0"/><path d="M17 7v10l-6-5z" fill="#1b1b1b"/><path d="M3 9.500v5l2.500-2.500z" fill="#1b1b1b"/></svg></span>
  </div>
  <div class="tray">
    <svg class="i24 moon" viewBox="0 0 24 24"><path d="M15 1c6 3 9 10 5 16S7 25 1 19c5 1 10 0 13-4s3-9 1-14z" fill="url(#moon-fill)"/></svg>
    <span class="weather">45°F</span>
    <span class="weather weather-txt">Clear</span>
    <svg class="i14 caret" viewBox="0 0 14 14"><path d="M1.500 10 7 4.500 12.500 10" fill="none" stroke="#eee" stroke-width="1.100"/></svg>
    <svg class="i16 tray-vol" viewBox="0 0 16 16"><path d="M1 5.500h3l4-3.500v12l-4-3.500H1z" fill="none" stroke="#eee"/><path d="M10.500 5.500c1 1.500 1 3.500 0 5M13 3.500c2 2.500 2 6.500 0 9" fill="none" stroke="#eee"/></svg>
    <svg class="i16 tray-bat" viewBox="0 0 18 16"><path d="M1.500 4v2.500a2 2 0 0 0 4 0V4M2.500 4V2M4.500 4V2M3.500 8.500V12" fill="none" stroke="#eee"/><rect x="6.500" y="4.500" width="10" height="7" fill="none" stroke="#eee"/><rect x="8" y="6" width="7" height="4" fill="#eee"/></svg>
    <span class="tray-lang">ENG</span>
    <div class="clock"><span>6:58 AM</span><span>04/13/24</span></div>
    <svg class="i18 notif" viewBox="0 0 18 18"><path d="M1.500 2.500h15v11H11l-2 2-2-2H1.500z" fill="none" stroke="#eee"/></svg>
    <span class="show-desktop"></span>
  </div>
</footer>

</body>
</html>
```

FILE: styles.css
```css
* {
  box-sizing: border-box;
}

html, body {
  margin: 0;
  height: 768px;
  overflow: hidden;
}

body {
  display: flex;
  flex-direction: column;
  width: 1366px;
  font-family: "Noto Sans", sans-serif;
  background: #000;
}

svg {
  display: block;
  flex: none;
}

.defs {
  position: absolute;
  width: 0;
  height: 0;
}

.i10 { width: 10px; height: 10px; }
.i12 { width: 12px; height: 12px; }
.i14 { width: 14px; height: 14px; }
.i16 { width: 16px; height: 16px; }
.i18 { width: 18px; height: 18px; }
.i24 { width: 24px; height: 24px; }

/* chrome window */
.chrome {
  background: #cde8c0;
}

.tabstrip {
  display: flex;
  align-items: center;
  height: 40px;
  padding-left: 6px;
}

.tab-menu {
  display: flex;
  align-items: center;
  justify-content: center;
  width: 28px;
  height: 28px;
  background: #fff;
  border-radius: 9px;
  margin-right: 3px;
}

.tabs {
  display: flex;
}

.tab {
  display: flex;
  align-items: center;
  justify-content: center;
  width: 32.07px;
  height: 15px;
  border-right: 1px solid #f5fbf1;
}

.tabs-right .tab {
  width: 31.07px;
}

.fav {
  width: 18px;
  height: 18px;
}

.globe-grey { color: #5f6368; }
.globe-dark { color: #26282b; }

.rg {
  width: 18px;
  height: 18px;
  background: #fff;
  color: #222;
  font: 14px/18px "Liberation Serif", serif;
  text-align: center;
}

.rg sup {
  font-size: 7px;
  line-height: 0;
}

.pdf {
  width: 16px;
  height: 20px;
  background: #d84a36;
  color: #f7e5e0;
  font: bold 7px/9px "Liberation Sans", sans-serif;
  text-align: center;
  padding-top: 1px;
}

.tab-active {
  position: relative;
  display: flex;
  align-items: center;
  justify-content: center;
  align-self: flex-end;
  width: 32px;
  height: 34px;
  margin: 0 3px 0 2px;
  padding-bottom: 6px;
  background: #fff;
  border-radius: 10px 10px 0 0;
}

.tab-active::before,
.tab-active::after {
  content: "";
  position: absolute;
  bottom: 0;
  width: 8px;
  height: 8px;
}

.tab-active::before {
  left: -8px;
  background: radial-gradient(circle at 0 0, transparent 8px, #fff 8.500px);
}

.tab-active::after {
  right: -8px;
  background: radial-gradient(circle at 100% 0, transparent 8px, #fff 8.500px);
}

.new-tab {
  width: 12px;
  height: 12px;
  margin-left: 10px;
}

.win-ctrls {
  display: flex;
  align-items: center;
  gap: 34px;
  margin-left: auto;
  padding-right: 18px;
}

.win-ctrls svg {
  width: 12px;
  height: 12px;
}

.toolbar {
  display: flex;
  align-items: center;
  height: 45px;
  padding-left: 4px;
  background: #fff;
  border-radius: 10px 10px 0 0;
}

.tb-btn {
  display: flex;
  align-items: center;
  justify-content: center;
  width: 36px;
  height: 36px;
  flex: none;
}

.omnibox {
  display: flex;
  align-items: center;
  width: 727px;
  height: 34px;
  margin-left: 8px;
  background: #e1e3e1;
  border-radius: 17px;
}

.tune {
  display: flex;
  align-items: center;
  justify-content: center;
  width: 24px;
  height: 24px;
  margin-left: 5px;
  background: #fff;
  border-radius: 50%;
}

.omni-url {
  margin-left: 8px;
  font-size: 13.350px;
  color: #5a5d60;
  white-space: nowrap;
}

.omni-url b {
  font-weight: 400;
  color: #202124;
}

.omni-star {
  width: 18px;
  height: 18px;
  margin-left: auto;
  margin-right: 15px;
}

.ext-row {
  display: flex;
  margin-left: 8px;
}

.tb-sep {
  width: 2px;
  height: 20px;
  margin: 0 8px;
  background: #cde8c0;
}

.avatar {
  width: 20px;
  height: 20px;
  border-radius: 50%;
  background: #44586a;
  color: #fff;
  font-size: 10px;
  line-height: 20px;
  text-align: center;
}

.update-pill {
  display: flex;
  align-items: center;
  justify-content: space-between;
  width: 159px;
  height: 34px;
  margin-left: 4px;
  padding: 0 14px 0 12px;
  background: #cde8c0;
  border-radius: 17px;
  font-size: 11.400px;
  color: #23331d;
  white-space: nowrap;
}

.update-pill svg {
  width: 4px;
  height: 16px;
  fill: #23331d;
}

.bookmarks {
  display: flex;
  align-items: center;
  gap: 17px;
  height: 35px;
  padding: 0 0 6px 12px;
  background: #fff;
  font-size: 11.250px;
  color: #2c2c2c;
  white-space: nowrap;
}

.bm {
  display: flex;
  align-items: center;
  gap: 6px;
}

.qa {
  fill: #fff;
  font: bold 6px "Liberation Sans", sans-serif;
  text-anchor: middle;
}

.bm-more {
  width: 12px;
  height: 12px;
  margin-left: auto;
  margin-right: 30px;
}

/* vmrc bar */
.vm-bar {
  position: relative;
  display: flex;
  flex-direction: column;
  height: 62px;
  padding: 5px 10px 0;
  background: #fafafa;
  border-top: 1px solid #c8c8c8;
}

.vm-row {
  display: flex;
  justify-content: space-between;
}

.cursor {
  position: absolute;
  left: 2px;
  top: 3px;
  width: 14px;
  height: 22px;
}

.vm-name {
  margin-top: -2px;
  font: 600 16px/18px "Open Sans", sans-serif;
  color: #5c5c5c;
}

.vm-actions {
  display: flex;
  align-items: flex-start;
  gap: 10px;
  padding-right: 5px;
}

.vm-lang {
  width: 119px;
  height: 29px;
  background: #fff;
  border: 1px solid #bbb;
  border-radius: 3px;
  font: 12px "Liberation Sans", sans-serif;
  color: #222;
  text-align-last: center;
}

.vm-btn {
  height: 23px;
  padding: 0 12px;
  background: transparent;
  border: 1px solid #0079b8;
  border-radius: 3px;
  font: 11px "Open Sans", sans-serif;
  letter-spacing: 1.360px;
  color: #0079b8;
  text-transform: uppercase;
}

.vm-notes {
  margin-top: auto;
  padding-bottom: 8px;
  font: 11.450px/14px "Open Sans", sans-serif;
  color: #777;
}

/* ubuntu guest */
.guest {
  display: flex;
  flex-direction: column;
  height: 546px;
  padding-top: 5px;
  background: #000;
}

.gnome-bar {
  display: grid;
  grid-template-columns: 657px auto 1fr;
  align-items: center;
  height: 27px;
  flex: none;
  padding: 0 16px 0 18px;
  background: #111;
  color: #eee;
  font-size: 14.200px;
}

.gnome-left {
  display: flex;
  gap: 37px;
}

.gnome-act {
  letter-spacing: 0.300px;
}

.gnome-app {
  display: flex;
  align-items: center;
  gap: 7px;
}

.gnome-tray {
  display: flex;
  justify-content: flex-end;
  gap: 12px;
}

.desktop {
  display: flex;
  flex: 1;
  min-height: 0;
}

.dock {
  display: flex;
  flex-direction: column;
  align-items: center;
  width: 70px;
  flex: none;
  padding-top: 6px;
  background: #1d0e19;
}

.dock-item {
  position: relative;
  display: flex;
  align-items: center;
  justify-content: center;
  width: 64px;
  height: 68px;
}

.dock-active {
  height: 64px;
  margin-bottom: 3px;
  background: #433a3f;
  border-radius: 12px;
}

.dock-active::before,
.dock-item:nth-child(3)::before {
  content: "";
  position: absolute;
  left: 0;
  top: 50%;
  width: 6px;
  height: 6px;
  margin-top: -3px;
  border-radius: 50%;
  background: #e95420;
}

.dock-ico {
  width: 48px;
  height: 48px;
}

.dock-store {
  margin-top: -3px;
}

.dock-cut {
  align-items: flex-start;
  height: 27px;
  margin-top: 11px;
}

.dock-cut .dock-ico {
  height: 18px;
}

.dock-apps {
  display: grid;
  grid-template-columns: repeat(3, 6px);
  gap: 6px;
  margin-top: 10px;
}

.dock-apps i {
  width: 6px;
  height: 6px;
  background: #f4f4f4;
  border-radius: 1px;
}

/* firefox */
.firefox {
  display: flex;
  flex-direction: column;
  flex: 1;
  min-width: 0;
}

.ff-tabbar {
  display: flex;
  align-items: center;
  height: 44px;
  flex: none;
  background: #ebebeb;
}

.ff-list {
  display: flex;
  align-items: center;
  justify-content: center;
  flex: none;
  width: 42px;
  height: 100%;
  border-right: 1px solid #d8d8d8;
}

.ff-tab {
  display: flex;
  align-items: center;
  flex: none;
  width: 221px;
  height: 36px;
  margin-left: 5px;
  padding: 0 10px 0 9px;
  background: #fff;
  border-radius: 4px;
  box-shadow: 0 0 3px rgba(0, 0, 0, 0.35);
}

.ff-tab-title {
  flex: 1;
  margin-left: 7px;
  font-size: 14.100px;
  color: #444;
  white-space: nowrap;
}

.ff-new {
  width: 14px;
  height: 14px;
  margin-left: 15px;
}

.ff-alltabs {
  width: 14px;
  height: 14px;
  margin-left: 832px;
  margin-right: 56px;
}

.ff-win {
  display: flex;
  align-items: center;
  justify-content: center;
  flex: none;
  width: 22px;
  height: 22px;
  margin-right: 12px;
  background: #dcdcdc;
  border-radius: 50%;
}

.ff-toolbar {
  display: flex;
  align-items: center;
  height: 41px;
  flex: none;
  padding-left: 6px;
  background: #f9f9fb;
  border-bottom: 1px solid #aaa;
}

.ff-nav {
  display: flex;
  align-items: center;
  justify-content: center;
  width: 36px;
  height: 32px;
}

.ff-url {
  display: flex;
  align-items: center;
  gap: 9px;
  width: 830px;
  height: 32px;
  margin-left: 101px;
  padding: 0 8px 0 10px;
  background: #f0f0f4;
  border-radius: 4px;
}

.ff-url-text {
  margin-left: 2px;
  font-size: 14.750px;
  color: #8a8a8f;
  white-space: nowrap;
}

.ff-url-text b {
  font-weight: 400;
  color: #222;
}

.ff-star {
  margin-left: auto;
}

.ff-tools {
  display: flex;
  gap: 20px;
  margin-left: 111px;
}

.page {
  position: relative;
  display: flex;
  flex-direction: column;
  align-items: center;
  flex: 1;
  min-height: 0;
  background: #8f8f91;
  font-family: "Liberation Sans", sans-serif;
}

.page h1 {
  margin: 21px 0 0;
  font-size: 32px;
  line-height: 37px;
  color: #0d55ad;
}

.page-time {
  margin: 22px 0 0;
  font-size: 16px;
  line-height: 18px;
  color: #262626;
}

.page-card {
  width: 340px;
  height: 155px;
  margin-top: 20px;
  background: #959597;
  border-radius: 4px;
}

.page-link {
  margin-top: 9px;
  font-size: 16px;
  line-height: 18px;
  color: #0d55ad;
}

.alert {
  position: absolute;
  left: 399px;
  top: 139px;
  width: 499px;
  height: 151px;
  padding: 15px 16px 16px;
  background: #fff;
  border-radius: 8px;
  box-shadow: 0 2px 14px rgba(0, 0, 0, 0.3);
  font-family: "Noto Sans", sans-serif;
  color: #15141a;
}

.alert-host {
  display: flex;
  align-items: center;
  gap: 4px;
  height: 18px;
  font-size: 13.700px;
  font-weight: 700;
}

.alert-msg {
  margin: 17.500px 0 0;
  font-size: 14.100px;
  line-height: 17px;
}

.alert-foot {
  display: flex;
  justify-content: flex-end;
  margin-top: 16.500px;
}

.alert-ok {
  width: 53px;
  height: 34px;
  padding: 0;
  background: #0060df;
  border: none;
  border-radius: 4px;
  color: #fff;
  font: 700 14px "Noto Sans", sans-serif;
}

.status-panel {
  position: absolute;
  left: 0;
  bottom: 0;
  width: 323px;
  height: 21px;
  padding-left: 4px;
  border: 1px solid #777a;
  border-width: 1px 1px 0 0;
  border-radius: 0 4px 0 0;
  background: #8f8f91;
  font: 14.200px/20px "Noto Sans", sans-serif;
  color: #2a2a2a;
  white-space: nowrap;
}

/* windows taskbar */
.taskbar {
  display: flex;
  align-items: center;
  height: 40px;
  flex: none;
  background: #1b1b1b;
  color: #eee;
}

.start {
  display: flex;
  align-items: center;
  justify-content: center;
  width: 49px;
  height: 40px;
}

.start svg {
  width: 16px;
  height: 16px;
}

.search {
  display: flex;
  align-items: center;
  width: 287px;
  height: 39px;
  margin-top: 1px;
  padding-left: 11px;
  background: #f0f0f0;
  border: 1px solid #bbb;
  border-bottom: none;
}

.search-text {
  margin: -3px 0 0 9px;
  font-size: 14px;
  color: #1f2933;
  white-space: nowrap;
}

.search-art {
  width: 64px;
  height: 34px;
  margin-left: auto;
  margin-right: 9px;
}

.cortana {
  width: 15px;
  height: 15px;
  margin: 0 17px;
  border: 2px solid #f4f4f4;
  border-radius: 50%;
}

.task-icons {
  display: flex;
  margin-left: 1px;
}

.task {
  position: relative;
  display: flex;
  align-items: center;
  justify-content: center;
  width: 49px;
  height: 40px;
}

.task.on::after {
  content: "";
  position: absolute;
  left: 4px;
  right: 5px;
  bottom: 0;
  height: 2px;
  background: #76b9ed;
}

.badge {
  position: absolute;
  right: 7px;
  bottom: 4px;
  width: 16px;
  height: 16px;
  border-radius: 50%;
  color: #fff;
  font-size: 10px;
  line-height: 15px;
  text-align: center;
}

.badge-s { background: #44586a; }
.badge-hi { background: #7b1fa2; }
.badge-n { background: #333; border: 1px solid #aaa; line-height: 14px; }

.word-w {
  fill: #fff;
  font: bold 9px "Liberation Sans", sans-serif;
  text-anchor: middle;
}

.zoom-t {
  fill: #fff;
  font: 700 11px "Noto Sans", sans-serif;
  text-anchor: middle;
}

.tray {
  display: flex;
  align-items: center;
  margin-left: auto;
  font-size: 13px;
  color: #eee;
  white-space: nowrap;
}

.moon {
  margin-right: 7px;
}

.weather-txt {
  margin-left: 9px;
}

.caret {
  margin-left: 25px;
}

.tray-vol {
  margin-left: 8px;
}

.tray-bat {
  margin-left: 8px;
  width: 18px;
}

.tray-lang {
  margin-left: 6px;
  font-size: 12px;
}

.clock {
  display: flex;
  flex-direction: column;
  align-items: center;
  width: 72px;
  font-size: 12px;
  line-height: 18px;
}

.notif {
  margin-left: 7px;
}

.show-desktop {
  width: 5px;
  height: 40px;
  margin-left: 19px;
  border-left: 1px solid #555;
}
```
